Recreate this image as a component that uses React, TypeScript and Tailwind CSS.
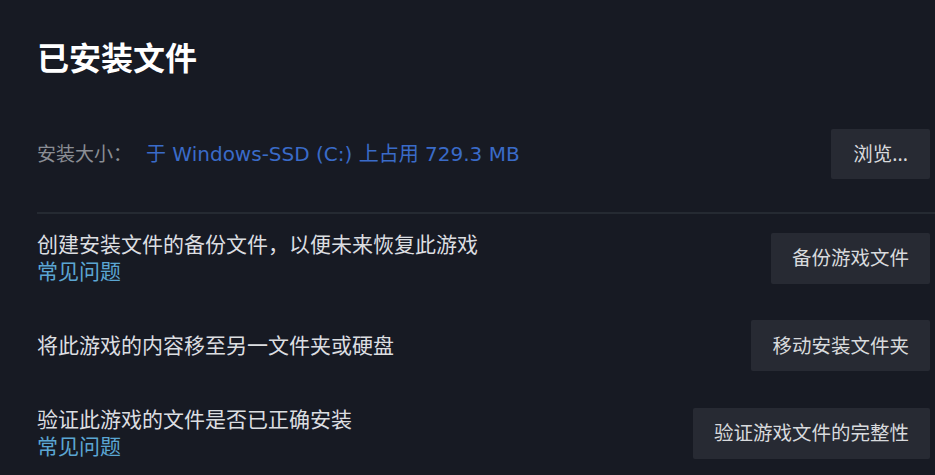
import React from "react";

const font = { fontFamily: '"Noto Sans", "Noto Sans CJK SC", sans-serif' };

interface RowProps {
  text: string;
  action: string;
  faq?: boolean;
}

function ActionRow({ text, action, faq }: RowProps) {
  return (
    <div className="flex items-center justify-between">
      <div className="flex flex-col">
        <span className="text-[21px] leading-[27px] text-[#dcdee1]">{text}</span>
        {faq && (
          <span className="text-[21px] leading-[27px] text-[#5ba6d3]">常见问题</span>
        )}
      </div>
      <button className="h-[51px] px-[21px] rounded-[2px] bg-[#272a33] text-[19.5px] text-[#d8dadd]">
        {action}
      </button>
    </div>
  );
}

export default function App() {
  return (
    <div className="w-[935px] h-[475px] bg-[#171a23] overflow-hidden" style={font}>
      <div className="pl-[37px] pr-[5px] pt-[34px]">
        <h1 className="text-[32px] font-bold leading-[48px] text-white">已安装文件</h1>

        {/* install size */}
        <div className="mt-[47px] flex items-center justify-between">
          <div className="flex items-center gap-[14px] text-[19px]">
            <span className="text-[#8a8d94]">安装大小：</span>
            <span className="text-[20px] text-[#3a6bc8] font-['DejaVu_Sans','Noto_Sans_CJK_SC',sans-serif]">
              于 Windows-SSD (C:) 上占用 729.3 MB
            </span>
          </div>
          <button className="h-[50px] px-[22px] rounded-[2px] bg-[#272a33] text-[19.5px] text-[#d8dadd]">
            浏览...
          </button>
        </div>

        <div className="mt-[33px] h-[2px] bg-[#252a32] -mr-[5px]" />

        <div className="mt-[17px] flex flex-col gap-[35px]">
          <ActionRow
            text="创建安装文件的备份文件，以便未来恢复此游戏"
            action="备份游戏文件"
            faq
          />
          <ActionRow text="将此游戏的内容移至另一文件夹或硬盘" action="移动安装文件夹" />
          <ActionRow text="验证此游戏的文件是否已正确安装" action="验证游戏文件的完整性" faq />
        </div>
      </div>
    </div>
  );
}
